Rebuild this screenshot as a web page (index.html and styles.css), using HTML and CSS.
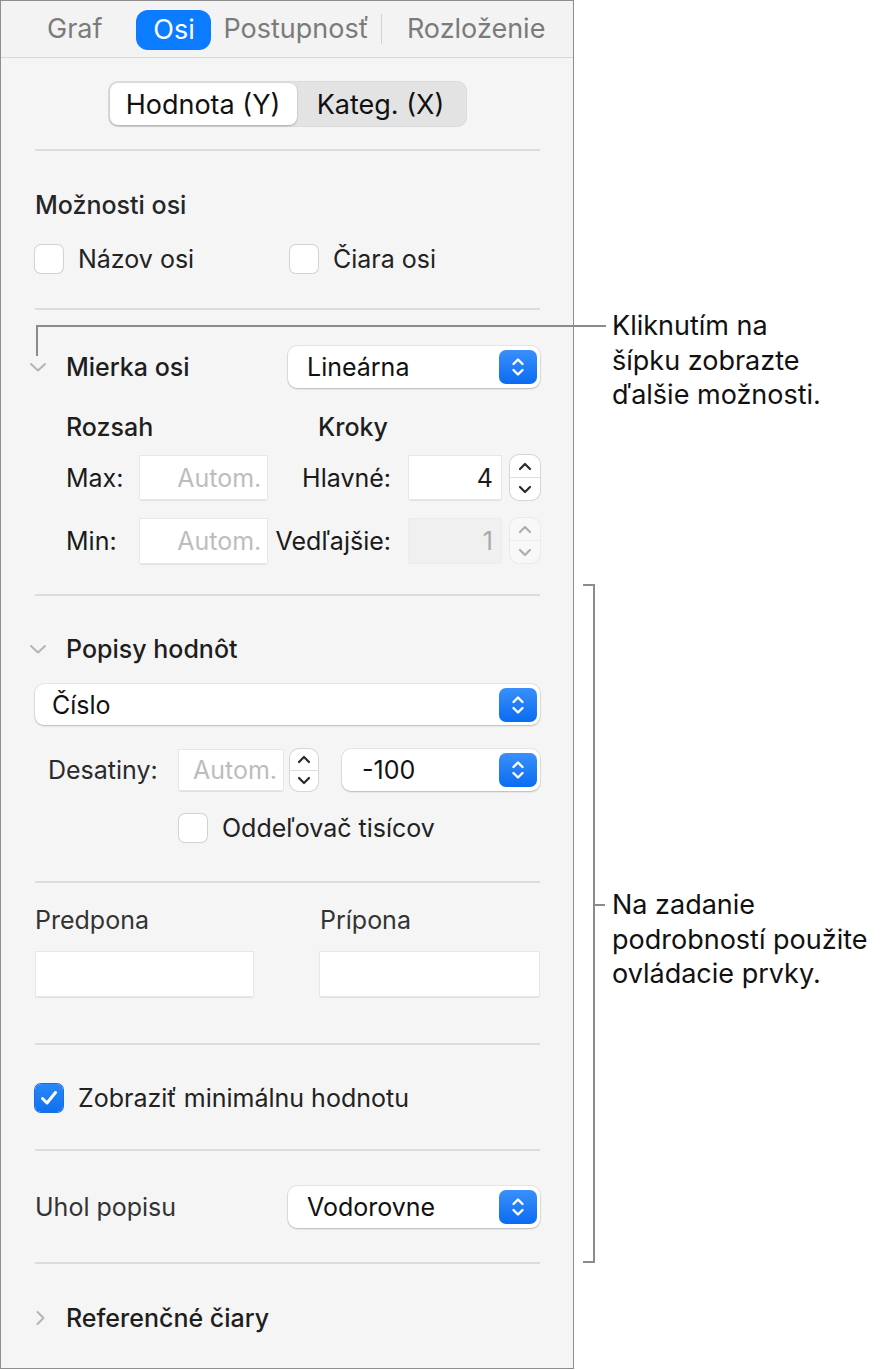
FILE: index.html
```html
<!DOCTYPE html>
<html lang="sk">
<head>
<meta charset="utf-8">
<title>Osi</title>
<link rel="stylesheet" href="styles.css">
</head>
<body>
<div class="figure">
  <div class="panel">
    <nav class="tabs">
      <span class="tab tab-graf">Graf</span>
      <span class="tab tab-active">Osi</span>
      <span class="tab">Postupnosť</span>
      <span class="tab-sep"></span>
      <span class="tab tab-last">Rozloženie</span>
    </nav>

    <div class="seg-wrap">
      <div class="seg">
        <span class="seg-item seg-on">Hodnota (Y)</span>
        <span class="seg-item seg-off">Kateg. (X)</span>
      </div>
    </div>

    <div class="rule rule-first"></div>

    <section class="sec sec-options">
      <div class="title">Možnosti osi</div>
      <div class="check-row">
        <span class="check check-w"><span class="box"></span>Názov osi</span>
        <span class="check"><span class="box"></span>Čiara osi</span>
      </div>
    </section>

    <div class="rule"></div>

    <section class="sec sec-scale">
      <div class="disc-row">
        <svg class="chev" width="20" height="12" viewBox="0 0 20 12"><path d="M3 3 L10 9.5 L17 3" fill="none" stroke="#b4b4b4" stroke-width="2" stroke-linecap="round" stroke-linejoin="round"/></svg>
        <span class="head">Mierka osi</span>
        <div class="popup popup-half">
          <span class="popup-label">Lineárna</span>
          <span class="pbtn"><svg width="14" height="24" viewBox="0 0 14 24"><path d="M2.5 9 L7 4.5 L11.5 9 M2.5 15 L7 19.5 L11.5 15" fill="none" stroke="#fff" stroke-width="2.4" stroke-linecap="round" stroke-linejoin="round"/></svg></span>
        </div>
      </div>

      <div class="sub-row">
        <span class="sub sub-a">Rozsah</span>
        <span class="sub">Kroky</span>
      </div>

      <div class="field-row">
        <span class="flbl">Max:</span>
        <span class="field field-auto">Autom.</span>
        <span class="flbl-r">Hlavné:</span>
        <span class="field field-num">4</span>
        <span class="stepper">
          <span class="step-half"><svg width="14" height="9" viewBox="0 0 14 9"><path d="M2 7 L7 2 L12 7" fill="none" stroke="#2a2a2a" stroke-width="2.2" stroke-linecap="round" stroke-linejoin="round"/></svg></span>
          <span class="step-half step-low"><svg width="14" height="9" viewBox="0 0 14 9"><path d="M2 2 L7 7 L12 2" fill="none" stroke="#2a2a2a" stroke-width="2.2" stroke-linecap="round" stroke-linejoin="round"/></svg></span>
        </span>
      </div>

      <div class="field-row field-row-2">
        <span class="flbl">Min:</span>
        <span class="field field-auto field-tall">Autom.</span>
        <span class="flbl-r">Vedľajšie:</span>
        <span class="field field-num field-dis field-tall">1</span>
        <span class="stepper stepper-dis">
          <span class="step-half"><svg width="14" height="9" viewBox="0 0 14 9"><path d="M2 7 L7 2 L12 7" fill="none" stroke="#2a2a2a" stroke-width="2.2" stroke-linecap="round" stroke-linejoin="round"/></svg></span>
          <span class="step-half step-low"><svg width="14" height="9" viewBox="0 0 14 9"><path d="M2 2 L7 7 L12 2" fill="none" stroke="#2a2a2a" stroke-width="2.2" stroke-linecap="round" stroke-linejoin="round"/></svg></span>
        </span>
      </div>
    </section>

    <div class="rule"></div>

    <section class="sec sec-labels">
      <div class="disc-row disc-row-text">
        <svg class="chev" width="20" height="12" viewBox="0 0 20 12"><path d="M3 3 L10 9.5 L17 3" fill="none" stroke="#b4b4b4" stroke-width="2" stroke-linecap="round" stroke-linejoin="round"/></svg>
        <span class="head">Popisy hodnôt</span>
      </div>

      <div class="popup popup-full">
        <span class="popup-label">Číslo</span>
        <span class="pbtn"><svg width="14" height="24" viewBox="0 0 14 24"><path d="M2.5 9 L7 4.5 L11.5 9 M2.5 15 L7 19.5 L11.5 15" fill="none" stroke="#fff" stroke-width="2.4" stroke-linecap="round" stroke-linejoin="round"/></svg></span>
      </div>

      <div class="dec-row">
        <span class="dec-lbl">Desatiny:</span>
        <span class="field field-auto field-dec">Autom.</span>
        <span class="stepper stepper-dec">
          <span class="step-half"><svg width="14" height="9" viewBox="0 0 14 9"><path d="M2 7 L7 2 L12 7" fill="none" stroke="#2a2a2a" stroke-width="2.2" stroke-linecap="round" stroke-linejoin="round"/></svg></span>
          <span class="step-half step-low"><svg width="14" height="9" viewBox="0 0 14 9"><path d="M2 2 L7 7 L12 2" fill="none" stroke="#2a2a2a" stroke-width="2.2" stroke-linecap="round" stroke-linejoin="round"/></svg></span>
        </span>
        <div class="popup popup-neg">
          <span class="popup-label">-100</span>
          <span class="pbtn"><svg width="14" height="24" viewBox="0 0 14 24"><path d="M2.5 9 L7 4.5 L11.5 9 M2.5 15 L7 19.5 L11.5 15" fill="none" stroke="#fff" stroke-width="2.4" stroke-linecap="round" stroke-linejoin="round"/></svg></span>
        </div>
      </div>

      <div class="sep-row">
        <span class="check"><span class="box"></span>Oddeľovač tisícov</span>
      </div>
    </section>

    <div class="rule"></div>

    <section class="sec sec-affix">
      <div class="affix-col">
        <span class="plain">Predpona</span>
        <span class="field field-affix"></span>
      </div>
      <div class="affix-col affix-col-2">
        <span class="plain">Prípona</span>
        <span class="field field-affix field-affix-2"></span>
      </div>
    </section>

    <div class="rule"></div>

    <section class="sec sec-min">
      <span class="check"><span class="box box-on"><svg width="20" height="18" viewBox="0 0 20 18"><path d="M3.5 9.5 L8 14 L16.5 3.5" fill="none" stroke="#fff" stroke-width="3" stroke-linecap="round" stroke-linejoin="round"/></svg></span>Zobraziť minimálnu hodnotu</span>
    </section>

    <div class="rule"></div>

    <section class="sec sec-angle">
      <span class="plain">Uhol popisu</span>
      <div class="popup popup-half">
        <span class="popup-label">Vodorovne</span>
        <span class="pbtn"><svg width="14" height="24" viewBox="0 0 14 24"><path d="M2.5 9 L7 4.5 L11.5 9 M2.5 15 L7 19.5 L11.5 15" fill="none" stroke="#fff" stroke-width="2.4" stroke-linecap="round" stroke-linejoin="round"/></svg></span>
      </div>
    </section>

    <div class="rule"></div>

    <section class="sec sec-ref">
      <div class="disc-row disc-row-text">
        <svg class="chev chev-right" width="20" height="18" viewBox="0 0 20 18"><path d="M6.5 3 L12.5 9 L6.5 15" fill="none" stroke="#b4b4b4" stroke-width="2" stroke-linecap="round" stroke-linejoin="round"/></svg>
        <span class="head">Referenčné čiary</span>
      </div>
    </section>
  </div>

  <div class="callout-h"></div>
  <div class="callout-v"></div>
  <p class="note note-1">Kliknutím na<br>šípku zobrazte<br>ďalšie možnosti.</p>

  <div class="bracket"></div>
  <div class="bracket-tick"></div>
  <p class="note note-2">Na zadanie<br>podrobností použite<br>ovládacie prvky.</p>
</div>
</body>
</html>
```

FILE: styles.css
```css
* { box-sizing: border-box; }
html, body { margin: 0; padding: 0; background: #ffffff; }
body {
  font-family: Inter, "Noto Sans", "Liberation Sans", sans-serif;
  color: #1d1d1d;
  font-size: 25px;
}
.figure { position: relative; width: 891px; height: 1370px; }

.panel {
  width: 574px;
  height: 1369px;
  border: 1px solid #8e8e8e;
  background: #f5f5f5;
  display: flex;
  flex-direction: column;
}

/* tabs */
.tabs {
  flex: none;
  height: 57px;
  border-bottom: 1px solid #d7d7d7;
  background: #f3f3f3;
  display: flex;
  align-items: center;
  padding-left: 34px;
  font-size: 27px;
  color: #7b7b7b;
}
.tab { padding: 0 12px; height: 40px; line-height: 40px; white-space: nowrap; }
.tab-graf { margin-right: 22px; }
.tab-active {
  width: 75px;
  padding: 0;
  text-align: center;
  background: #0b7bff;
  color: #ffffff;
  border-radius: 12px;
  margin-top: 2px;
}
.tab-sep { width: 1px; height: 30px; background: #d2d2d2; }
.tab-last { margin-left: 13px; }

/* segmented */
.seg-wrap { flex: none; padding-top: 23px; display: flex; justify-content: center; }
.seg {
  width: 359px;
  height: 46px;
  padding: 2px;
  border-radius: 10px;
  background: #e3e3e3;
  box-shadow: inset 0 0 0 1px #dcdcdc;
  display: flex;
  font-size: 27px;
}
.seg-item { display: flex; align-items: center; justify-content: center; color: #111; white-space: nowrap; }
.seg-on {
  width: 187px;
  background: #ffffff;
  border-radius: 8px;
  box-shadow: 0 1px 2px rgba(0,0,0,0.22), 0 0 0 0.5px rgba(0,0,0,0.06);
}
.seg-off { flex: 1; }

/* rules & sections */
.rule { flex: none; height: 2px; background: #dcdcdc; margin: 0 33px 0 34px; }
.rule-first { margin-top: 22px; }
.sec { flex: none; padding: 0 33px 0 34px; }

.title { font-weight: 500; line-height: 30px; height: 30px; color: #262626; }
.sec-options { height: 157px; padding-top: 39px; }
.check-row { display: flex; margin-top: 24px; }
.check { display: flex; align-items: center; height: 29px; color: #222; white-space: nowrap; }
.check-w { width: 255px; }
.box {
  flex: none;
  width: 28px;
  height: 28px;
  margin-right: 15px;
  border-radius: 6px;
  background: #ffffff;
  box-shadow: 0 0 0 1px #d3d3d3, 0 1px 1px rgba(0,0,0,0.06);
  display: flex;
  align-items: center;
  justify-content: center;
}
.box-on { background: linear-gradient(#2a87f8, #0f71f0); box-shadow: 0 0 0 1px #1a6fe0; }

/* disclosure */
.disc-row { display: flex; align-items: center; height: 42px; }
.disc-row-text { height: 30px; }
.chev { flex: none; margin-left: -7px; margin-right: 18px; }
.head { font-weight: 500; color: #1e1e1e; white-space: nowrap; }

/* popup */
.popup {
  display: flex;
  align-items: center;
  background: #ffffff;
  border-radius: 9px;
  box-shadow: 0 0 0 1px rgba(0,0,0,0.06), 0 1px 2px rgba(0,0,0,0.2);
  padding-left: 19px;
  padding-right: 3px;
  color: #111;
}
.popup-label { flex: 1; white-space: nowrap; }
.popup-half { width: 252px; height: 42px; margin-left: auto; }
.popup-full { width: 505px; height: 41px; margin-top: 20px; padding-left: 17px; }
.popup-neg { width: 198px; height: 42px; margin-left: 24px; padding-left: 20px; }
.pbtn {
  flex: none;
  width: 38px;
  height: 34px;
  border-radius: 7px;
  background: linear-gradient(#3a8ffb, #0a6cf1);
  display: flex;
  align-items: center;
  justify-content: center;
}

/* scale section */
.sec-scale { height: 284px; padding-top: 36px; }
.sub-row { display: flex; margin-top: 24px; padding-left: 31px; height: 30px; line-height: 30px; }
.sub { font-weight: 500; color: #1e1e1e; }
.sub-a { width: 252px; }

.field-row { display: flex; align-items: center; height: 45px; margin-top: 13px; padding-left: 31px; }
.field-row-2 { margin-top: 18px; }
.flbl { width: 75px; color: #1a1a1a; }
.flbl-r { width: 125px; text-align: right; color: #1a1a1a; white-space: nowrap; margin-right: 18px; }
.field {
  flex: none;
  display: flex;
  align-items: center;
  justify-content: flex-end;
  height: 43px;
  padding-right: 6px;
  background: #ffffff;
  box-shadow: 0 0 0 1px #e7e7e7, 0 2px 0 -0.5px #cdcdcd;
  white-space: nowrap;
}
.field-tall { height: 44px; }
.field-auto { width: 127px; color: #bdbdbd; }
.field-num { width: 92px; color: #1a1a1a; padding-right: 8px; }
.field-dis { background: #f0f0f0; color: #a9a9a9; box-shadow: 0 0 0 1px #ececec; }

.stepper {
  flex: none;
  width: 30px;
  height: 45px;
  margin-left: 9px;
  border-radius: 9px;
  background: #ffffff;
  box-shadow: 0 0 0 1px #d6d6d6, 0 1px 1px rgba(0,0,0,0.08);
  display: flex;
  flex-direction: column;
}
.step-half { flex: 1; display: flex; align-items: center; justify-content: center; }
.step-low { border-top: 1px solid #dedede; }
.stepper-dis { opacity: 0.35; }

/* labels section */
.sec-labels { height: 285px; padding-top: 38px; }
.dec-row { display: flex; align-items: center; height: 42px; margin-top: 24px; padding-left: 13px; }
.dec-lbl { width: 131px; color: #2a2a2a; }
.field-dec { width: 104px; height: 40px; }
.stepper-dec { width: 28px; height: 42px; margin-left: 7px; }
.sep-row { margin-top: 22px; padding-left: 144px; }

/* affix */
.sec-affix { height: 160px; padding-top: 22px; display: flex; }
.affix-col { flex: none; display: flex; flex-direction: column; width: 285px; }
.affix-col-2 { flex: 1; width: auto; }
.plain { color: #333; line-height: 30px; height: 30px; white-space: nowrap; }
.field-affix { width: 217px; height: 44px; margin-top: 17px; margin-left: 1px; }
.field-affix-2 { width: 219px; margin-left: 0; }

.sec-min { height: 104px; padding-top: 38px; }

.sec-angle { height: 111px; padding-top: 35px; display: flex; align-items: flex-start; }
.sec-angle .plain { margin-top: 6px; }

.sec-ref { flex: 1; padding-top: 39px; }
.chev-right { margin-left: -4px; margin-right: 15px; }

/* annotations */
.callout-h { position: absolute; left: 36px; top: 325px; width: 570px; height: 2px; background: #8b8b8b; }
.callout-v { position: absolute; left: 36px; top: 325px; width: 2px; height: 31px; background: #8b8b8b; }
.bracket {
  position: absolute;
  left: 583px;
  top: 584px;
  width: 12px;
  height: 679px;
  border: 2px solid #8b8b8b;
  border-left: 0;
}
.bracket-tick { position: absolute; left: 594px; top: 904px; width: 11px; height: 2px; background: #8b8b8b; }
.note {
  position: absolute;
  left: 612px;
  margin: 0;
  font-size: 27px;
  line-height: 34.5px;
  color: #111;
  white-space: nowrap;
}
.note-1 { top: 309px; }
.note-2 { top: 888px; }
```
